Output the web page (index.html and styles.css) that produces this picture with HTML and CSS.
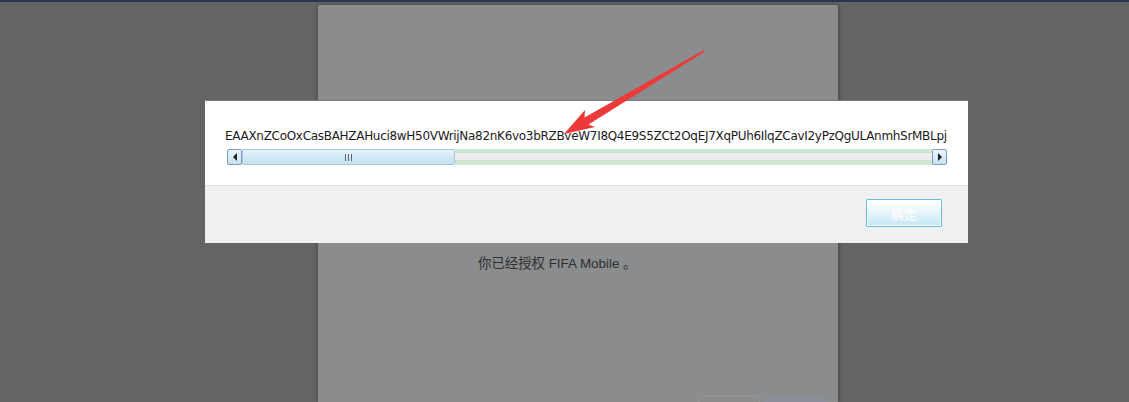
FILE: index.html
```html
<!DOCTYPE html>
<html lang="zh-CN">
<head>
<meta charset="utf-8">
<title>FIFA Mobile</title>
<link rel="stylesheet" href="styles.css">
</head>
<body>
<div class="topbar"></div>
<div class="stage">
  <div class="panel">
    <p class="msg">你已经授权 FIFA Mobile 。</p>
    <div class="panel-actions">
      <span class="ghost-btn"></span>
      <span class="ghost-btn ghost-primary"></span>
    </div>
  </div>
</div>

<div class="modal">
  <div class="modal-body">
    <div class="token">EAAXnZCoOxCasBAHZAHuci8wH50VWrijNa82nK6vo3bRZBveW7I8Q4E9S5ZCt2OqEJ7XqPUh6IlqZCavI2yPzQgULAnmhSrMBLpj</div>
    <div class="hscroll">
      <span class="sb-btn"><span class="tri tri-left"></span></span>
      <span class="sb-thumb"><span class="grip"></span></span>
      <span class="sb-track"></span>
      <span class="sb-btn"><span class="tri tri-right"></span></span>
    </div>
  </div>
  <div class="modal-footer">
    <button class="ok-btn">确定</button>
  </div>
</div>

<svg class="arrow" width="1129" height="402" viewBox="0 0 1129 402">
  <polygon points="564,134 595,127 588.5,124.5 704.5,51.8 703.5,50.2 584.5,117.5 585,110" fill="#ec3a3a"/>
</svg>
</body>
</html>
```

FILE: styles.css
```css
html, body {
  margin: 0;
  padding: 0;
}
body {
  width: 1129px;
  height: 402px;
  overflow: hidden;
  background: #636465;
  font-family: "Liberation Sans", "Noto Sans CJK SC", sans-serif;
  position: relative;
}
.topbar {
  height: 2px;
  background: #2b3550;
}
.stage {
  display: flex;
  padding-left: 318px;
  padding-top: 3px;
}
.panel {
  width: 520px;
  height: 397px;
  background: #8b8c8d;
  border-radius: 2px 2px 0 0;
  box-shadow: -2px 0 4px rgba(0,0,0,0.15), 2px 0 3px rgba(0,0,0,0.2);
  display: flex;
  flex-direction: column;
}
.msg {
  margin: 0;
  padding-top: 249px;
  padding-left: 160px;
  font-size: 13.4px;
  line-height: 20px;
  color: #2f3031;
}
.panel-actions {
  margin-top: auto;
  display: flex;
  justify-content: flex-end;
  gap: 4px;
  padding-right: 12px;
  height: 6px;
}
.ghost-btn {
  width: 60px;
  height: 10px;
  border: 1px solid #959697;
  border-bottom: 0;
  border-radius: 2px 2px 0 0;
}
.ghost-primary {
  background: #8a8e98;
  border-color: #8a8e98;
}

.modal {
  position: absolute;
  left: 205px;
  top: 101px;
  width: 763px;
  height: 142px;
  background: #ffffff;
  box-shadow: 0 -1px 0 #7b7b7b;
  display: flex;
  flex-direction: column;
}
.modal-body {
  height: 84px;
  padding-left: 20px;
  box-sizing: border-box;
  padding-top: 27px;
}
.token {
  font-family: "DejaVu Sans", sans-serif;
  font-size: 12px;
  line-height: 16px;
  letter-spacing: -0.3px;
  color: #1a1a1a;
  white-space: nowrap;
}
.hscroll {
  margin-top: 5px;
  margin-left: 2px;
  width: 720px;
  height: 16px;
  display: flex;
}
.sb-btn {
  width: 15px;
  height: 16px;
  box-sizing: border-box;
  border: 1px solid #7f9db9;
  border-radius: 2px;
  background: linear-gradient(#eef6fc, #c6e0f1);
  display: flex;
  align-items: center;
  justify-content: center;
  flex: none;
}
.tri {
  width: 0;
  height: 0;
  border-top: 4px solid transparent;
  border-bottom: 4px solid transparent;
}
.tri-left { border-right: 4px solid #1d1d1d; }
.tri-right { border-left: 4px solid #1d1d1d; }
.sb-thumb {
  width: 213px;
  height: 16px;
  box-sizing: border-box;
  border: 1px solid #a8c7dc;
  border-radius: 2px;
  background: linear-gradient(#e9f4fb, #d2e8f6 50%, #c7e2f3);
  display: flex;
  align-items: center;
  justify-content: center;
  flex: none;
}
.grip {
  width: 7px;
  height: 7px;
  background: repeating-linear-gradient(90deg, #5d6670 0 1px, transparent 1px 3px);
}
.sb-track {
  flex: 1;
  height: 16px;
  box-sizing: border-box;
  background: linear-gradient(#c9ecd0 0 3px, #d8d8d8 3px 4px, #ededed 4px 11px, #d8d8d8 11px 12px, #c9ecd0 12px);
}

.modal-footer {
  flex: 1;
  background: #f0f0f0;
  border-top: 1px solid #dfdfdf;
  display: flex;
  justify-content: flex-end;
  align-items: flex-start;
  padding-top: 13px;
  padding-right: 26px;
}
.ok-btn {
  width: 76px;
  height: 28px;
  box-sizing: border-box;
  border: 1px solid #6abfe0;
  box-shadow: inset 0 0 0 1px #ffffff;
  border-radius: 1px;
  background: linear-gradient(#ffffff 10%, #c4e6f4);
  color: #ffffff;
  font-family: "Noto Sans CJK SC", sans-serif;
  font-size: 13px;
  padding: 0;
}

.arrow {
  position: absolute;
  left: 0;
  top: 0;
  pointer-events: none;
}
```
